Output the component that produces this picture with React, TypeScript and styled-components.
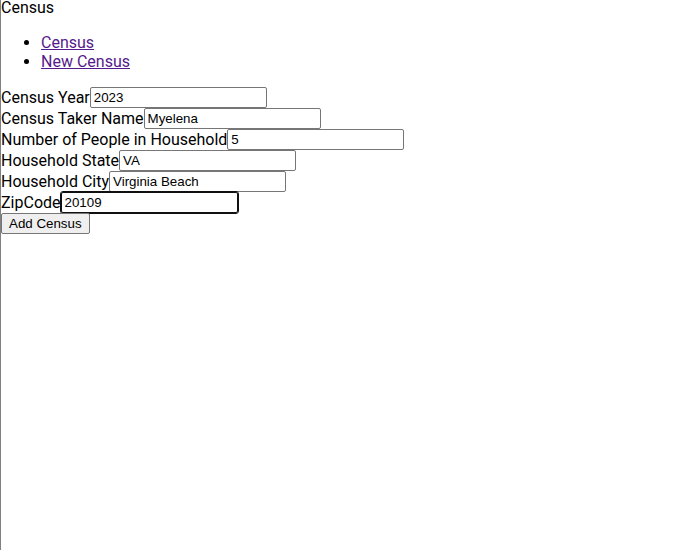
import styled, { createGlobalStyle } from 'styled-components';

const GlobalStyle = createGlobalStyle`
    body {
        margin: 0;
        font-family: Roboto, "Liberation Sans", sans-serif;
        font-size: 16px;
        color: #000;
        background: #fff;
    }
`

const Page = styled.div`
    min-height: 550px;
    border-left: 1px solid #808080;
    box-sizing: border-box;
`

const Title = styled.div`
    line-height: 15px;
`

const NavList = styled.ul`
    margin: 17.75px 0 16px;
    padding-left: 40px;
`

const NavLink = styled.a`
    color: #551a8b;
`

const Row = styled.div`
    display: flex;
    align-items: center;
    height: 21px;
`

const Field = styled.input<{ $focused?: boolean }>`
    font-family: "Liberation Sans", Arial, sans-serif;
    font-size: 13.33px;
    width: 177px;
    height: 21px;
    box-sizing: border-box;
    padding: 1px 2px 1px 3px;
    border: 1px solid #767676;
    border-radius: 2px;
    color: #000;
    outline: ${p => (p.$focused ? '1px solid #101010' : 'none')};
    ${p => p.$focused && 'border-color: #101010;'}
`

const SubmitButton = styled.button`
    font-family: "Liberation Sans", Arial, sans-serif;
    font-size: 13.33px;
    height: 21px;
    padding: 1px 7px;
    margin: 0;
    border: 1px solid #767676;
    border-radius: 2px;
    background: #efefef;
    color: #000;
`

const fields = [
    { label: 'Census Year', value: '2023' },
    { label: 'Census Taker Name', value: 'Myelena' },
    { label: 'Number of People in Household', value: '5' },
    { label: 'Household State', value: 'VA' },
    { label: 'Household City', value: 'Virginia Beach' },
    { label: 'ZipCode', value: '20109', focused: true },
]

const App = () => {
    return (
        <>
            <GlobalStyle />
            <Page>
                <Title>Census</Title>
                <NavList>
                    <li><NavLink href="#census">Census</NavLink></li>
                    <li><NavLink href="#new">New Census</NavLink></li>
                </NavList>
                <form onSubmit={e => e.preventDefault()}>
                    {fields.map(f => (
                        <Row key={f.label}>
                            <label>{f.label}</label>
                            <Field defaultValue={f.value} $focused={f.focused} />
                        </Row>
                    ))}
                    <Row>
                        <SubmitButton type="submit">Add Census</SubmitButton>
                    </Row>
                </form>
            </Page>
        </>
    );
}

export default App;
